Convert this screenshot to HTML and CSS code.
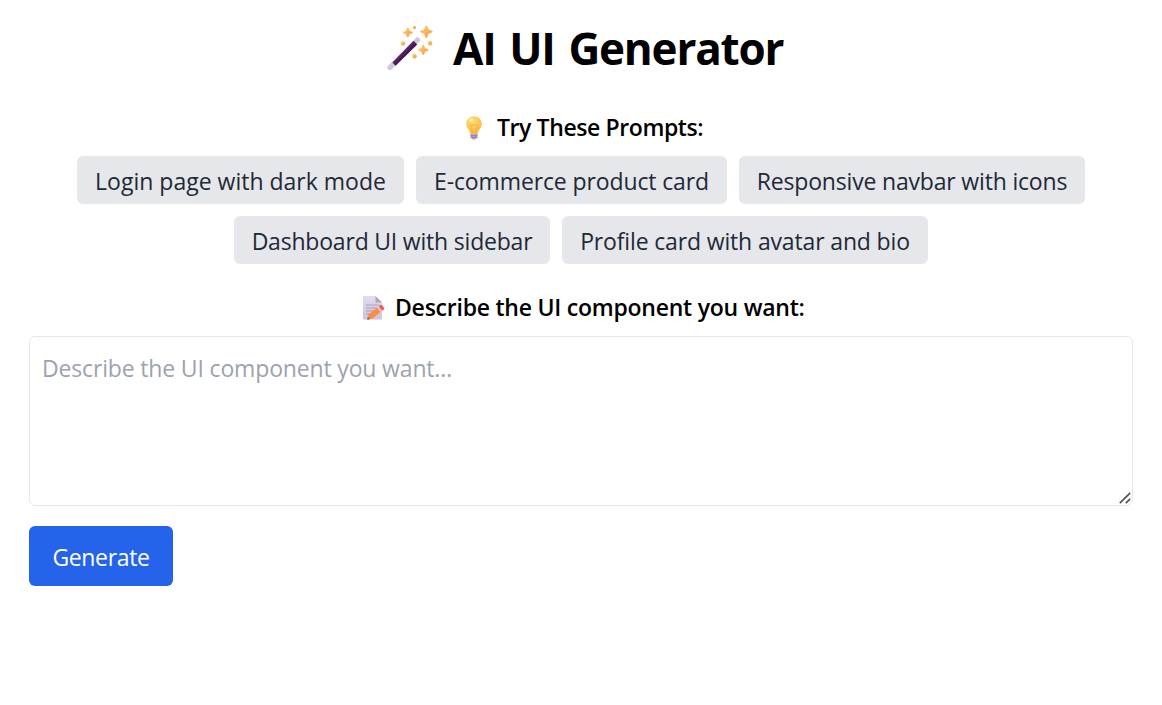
FILE: index.html
```html
<!DOCTYPE html>
<html lang="en">
<head>
<meta charset="utf-8">
<title>AI UI Generator</title>
<link rel="stylesheet" href="styles.css">
</head>
<body>
<main class="page">
  <h1 class="title">
    <svg class="wand" viewBox="0 0 46 46" aria-hidden="true">
      <defs>
        <linearGradient id="star" x1="0" y1="0" x2="1" y2="1"><stop offset="0" stop-color="#ffcf60"/><stop offset="1" stop-color="#f79a50"/></linearGradient>
        <linearGradient id="rod" x1="0" y1="0" x2="1" y2="1"><stop offset="0.35" stop-color="#72306f"/><stop offset="0.6" stop-color="#390c4b"/></linearGradient>
      </defs>
      <path d="M3 42.500 30.500 15" stroke="#d0c6dc" stroke-width="5.200" stroke-linecap="round"/>
      <path d="M5.400 37.400 26.600 15.800 30.200 19.400 8.600 40.800Z" fill="url(#rod)"/>
      <g fill="url(#star)">
        <path d="M39.300 .6q.8 0 1 .8l1.300 3.200 3.300 1.200q1.400.9 0 1.800l-3.300 1.200-1.300 3.500q-1 1.500-2 0l-1.300-3.500-3.200-1.200q-1.400-.9 0-1.800l3.200-1.200 1.300-3.200q.2-.8 1-.8Z"/>
        <path d="M20.800 2.500q.6 0 .8.700l1.100 2.500 2.600 1q1.200.8 0 1.600l-2.600.9-1.100 2.600q-.8 1.400-1.600 0l-1.100-2.600-2.500-.9q-1.200-.8 0-1.600l2.500-1 1.100-2.500q.1-.7.800-.7Z"/>
        <path d="M36.300 19.800q.6 0 .8.700l1.100 2.600 2.700 1q1.200.7 0 1.600l-2.700 1-1.100 2.700q-.8 1.400-1.600 0l-1.100-2.700-2.600-1q-1.200-.9 0-1.600l2.600-1 1.100-2.600q.1-.7.800-.7Z"/>
        <circle cx="27.500" cy="2.500" r="1.700"/><circle cx="16" cy="18.500" r="2.200"/><circle cx="43" cy="18.200" r="2.200"/><circle cx="27.500" cy="31.200" r="2.300"/>
      </g>
    </svg>
    <span class="title-text">AI UI Generator</span>
  </h1>

  <h2 class="subtitle subtitle-prompts">
    <svg class="bulb" viewBox="0 0 16 24" aria-hidden="true">
      <defs><radialGradient id="glass" cx=".4" cy=".3" r=".7"><stop offset="0" stop-color="#ffe070"/><stop offset="1" stop-color="#fdb540"/></radialGradient></defs>
      <path d="M8 .3a7.800 7.800 0 0 0-7.800 7.800c0 4.200 3.600 5.700 4.300 9.900h7c.7-4.200 4.300-5.700 4.300-9.900A7.800 7.800 0 0 0 8 .3Z" fill="url(#glass)"/>
      <path d="M6.800 17.500 5 11.200Q4 8.300 6 8.300q1.400.2 2 1.800.6-1.600 2-1.800 2 0 1 2.900l-1.800 6.300" fill="none" stroke="#f5a437" stroke-width=".7"/>
      <ellipse cx="5" cy="4.200" rx="2.200" ry="1.400" fill="#fff3b8" transform="rotate(-40 5 4.200)"/>
      <path d="M4.500 18.200h7v3.300q-.2.900-1.400 1L9.500 23.500h-3l-.6-1q-1.200-.1-1.400-1Z" fill="#b3a0bf"/>
      <path d="M4.300 19.300h7.400M4.500 21.300h7" stroke="#88769d" stroke-width=".8"/>
    </svg>
    <span class="prompts-text">Try These Prompts:</span>
  </h2>

  <div class="prompts">
    <button class="chip chip-login">Login page with dark mode</button>
    <button class="chip chip-product">E-commerce product card</button>
    <button class="chip chip-navbar">Responsive navbar with icons</button>
    <button class="chip chip-dashboard">Dashboard UI with sidebar</button>
    <button class="chip chip-profile">Profile card with avatar and bio</button>
  </div>

  <h2 class="subtitle subtitle-describe">
    <svg class="memo" viewBox="0 0 22 24" aria-hidden="true">
      <defs><linearGradient id="sheet" x1="0" y1="0" x2="0" y2="1"><stop offset="0" stop-color="#e5dceb"/><stop offset="1" stop-color="#cdc3df"/></linearGradient></defs>
      <path d="M0 0h12.500L19 6.500V23.500H0Z" fill="url(#sheet)"/>
      <path d="M12.500 0 19 6.500h-6.500Z" fill="#afa5b7"/>
      <path d="M3 9h13M3 12h12M3 15h9M3 18h5" stroke="#aaa1b4" stroke-width="1"/>
      <path d="M4.200 23.500 5.700 18.400 14.500 11.200 18 15.600 9.500 22.800Z" fill="#ff8a42"/>
      <path d="M4.200 23.500 4.900 21.200 6.600 23.200Z" fill="#5c4050"/>
      <path d="M14 11.600 16 10 19.500 14.300 17.500 16Z" fill="#d9cfe7"/>
      <path d="M15.600 10.300 17.300 9q1-.6 1.800.3l1.900 2.400q.7 1-.2 1.700l-1.700 1.300Z" fill="#f9575a"/>
    </svg>
    <span class="describe-text">Describe the UI component you want:</span>
  </h2>

  <div class="field">
    <textarea class="input" placeholder="Describe the UI component you want..."></textarea>
    <svg class="grip" viewBox="0 0 12 12" aria-hidden="true"><path d="M.8 11.200 11.200 .8M6.800 11.200 11.200 6.800" stroke="#555" stroke-width="1.700"/></svg>
  </div>

  <button class="generate">Generate</button>
</main>
</body>
</html>
```

FILE: styles.css
```css
* { box-sizing: border-box; }
body {
  margin: 0;
  background: #fff;
  color: #000;
  font-family: "Segoe UI", "Open Sans", "Noto Sans", sans-serif;
}
button, textarea { font: inherit; }
svg { display: block; flex: none; }
.page { padding: 18px 29px 0; }
.title, .subtitle { display: flex; margin: 0; white-space: nowrap; }
.title {
  height: 60px;
  padding-left: 358px;
  gap: 20px;
  align-items: center;
  font-size: 44px;
  line-height: 60px;
  font-weight: 700;
  letter-spacing: -1.2px;
  word-spacing: 3.500px;
}
.wand { width: 46px; height: 46px; }
.subtitle {
  height: 36px;
  align-items: center;
  font-size: 23px;
  line-height: 34px;
  font-weight: 600;
  letter-spacing: -0.24px;
}
.subtitle span { padding-bottom: 2px; }
.subtitle-prompts { margin-top: 32px; padding-left: 437px; gap: 15px; letter-spacing: -0.4px; }
.bulb { width: 16px; height: 24px; }
.prompts {
  display: flex;
  flex-wrap: wrap;
  justify-content: center;
  gap: 12px;
  margin-top: 10px;
}
.chip {
  height: 48px;
  padding: 2px 0 0;
  border: 0;
  border-radius: 6px;
  background: #e5e7eb;
  color: #1f2937;
  font-size: 23px;
  line-height: 36px;
  white-space: nowrap;
}
.chip-login { width: 327px; }
.chip-product { width: 311px; letter-spacing: -0.12px; }
.chip-navbar { width: 346px; letter-spacing: -0.18px; }
.chip-dashboard { width: 316px; letter-spacing: -0.2px; }
.chip-profile { width: 366px; letter-spacing: -0.15px; }
.subtitle-describe { margin-top: 26px; padding-left: 334px; gap: 10px; }
.memo { width: 22px; height: 24px; }
.field { position: relative; height: 170px; margin-top: 10px; }
.input {
  display: block;
  width: 100%;
  height: 100%;
  padding: 13px 12px;
  border: 1px solid #e5e7eb;
  border-radius: 6px;
  background: #fff;
  font-size: 23px;
  line-height: 36px;
  letter-spacing: -0.16px;
  resize: none;
  outline: 0;
}
.input::placeholder { color: #9ca3af; opacity: 1; }
.grip { position: absolute; right: 2px; bottom: 2px; width: 12px; height: 12px; }
.generate {
  display: block;
  width: 144px;
  height: 60px;
  margin-top: 20px;
  padding: 2px 0 0;
  border: 0;
  border-radius: 6px;
  background: #2563eb;
  color: #fff;
  font-size: 23px;
  line-height: 36px;
  letter-spacing: -0.35px;
}
```
